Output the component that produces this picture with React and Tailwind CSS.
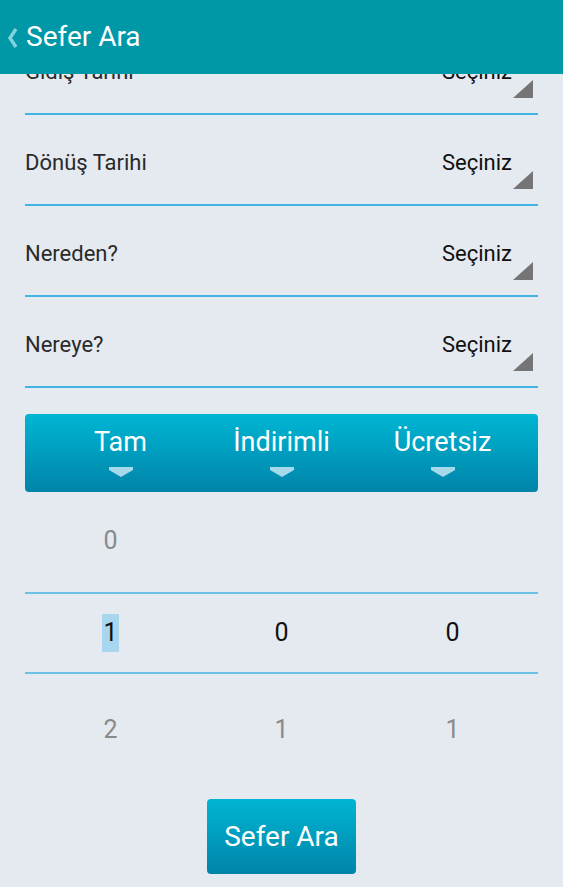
import React from "react";

const fields = ["Gidiş Tarihi", "Dönüş Tarihi", "Nereden?", "Nereye?"];
const columns = ["Tam", "İndirimli", "Ücretsiz"];

const Corner = () => (
  <svg width="20" height="18" viewBox="0 0 20 18" className="mb-[15px] shrink-0">
    <polygon points="20,0 20,18 0,18" fill="#757575" />
  </svg>
);

const HeadArrow = () => (
  <svg width="24" height="10" viewBox="0 0 24 10" className="mt-[9px]">
    <polygon points="0,0 24,0 24,3 12,10 0,3" fill="#a6d9ea" />
  </svg>
);

const FieldRow = ({ label }) => (
  <div className="h-[91px] flex justify-between border-b-2 border-[#42b4e4] pr-[5px]">
    <span className="pt-[34px] text-[22px] leading-[28px] text-[#2a2a2a]">{label}</span>
    <div className="flex items-end">
      <span className="self-start pt-[34px] text-[22px] leading-[28px] text-[#111] mr-[1px]">
        Seçiniz
      </span>
      <Corner />
    </div>
  </div>
);

export default function App() {
  return (
    <div
      className="w-[563px] h-[887px] overflow-hidden bg-[#e5e9f0] flex flex-col"
      style={{ fontFamily: "Roboto, 'Noto Sans', sans-serif" }}
    >
      {/* action bar */}
      <div className="relative z-10 h-[74px] shrink-0 bg-[#0097a7] flex items-center">
        <svg width="12" height="22" viewBox="0 0 12 22" className="ml-[6px] mr-[8px] mt-[2px]">
          <polyline points="10,2 4,11 10,20" fill="none" stroke="#7fd3dc" strokeWidth="3.5" />
        </svg>
        <span className="text-[28px] leading-[34px] text-white">Sefer Ara</span>
      </div>

      <div className="-mt-[50px] px-[25px] flex flex-col">
        {fields.map((f) => (
          <FieldRow key={f} label={f} />
        ))}

        {/* passenger header */}
        <div className="mt-[26px] h-[78px] rounded-[4px] bg-gradient-to-b from-[#00b6d3] to-[#0084a9] grid grid-cols-3 px-[15px]">
          {columns.map((c) => (
            <div key={c} className="flex flex-col items-center pt-[12px]">
              <span className="text-[27px] leading-[32px] text-white">{c}</span>
              <HeadArrow />
            </div>
          ))}
        </div>

        {/* picker */}
        <div className="h-[102px] grid grid-cols-3 border-b-2 border-[#6cc2e6]">
          <div className="flex justify-center pt-[34px] text-[25px] leading-[30px] text-[#8a8a8a]">0</div>
          <div />
          <div />
        </div>
        <div className="h-[80px] grid grid-cols-3 items-center border-b-2 border-[#6cc2e6] text-[25px] text-[#111]">
          <div className="flex justify-center">
            <span className="inline-block h-[38px] leading-[38px] px-[1px] bg-[#a9d6ef]">1</span>
          </div>
          <div className="flex justify-center leading-[30px]">0</div>
          <div className="flex justify-center leading-[30px]">0</div>
        </div>
        <div className="grid grid-cols-3 pt-[41px] text-[25px] leading-[30px] text-[#8a8a8a]">
          <div className="flex justify-center">2</div>
          <div className="flex justify-center">1</div>
          <div className="flex justify-center">1</div>
        </div>

        <div className="flex justify-center mt-[54px]">
          <button className="w-[149px] h-[75px] rounded-[4px] bg-gradient-to-b from-[#00b6d3] to-[#0084a9] text-white text-[28px] leading-[34px]">
            Sefer Ara
          </button>
        </div>
      </div>
    </div>
  );
}
